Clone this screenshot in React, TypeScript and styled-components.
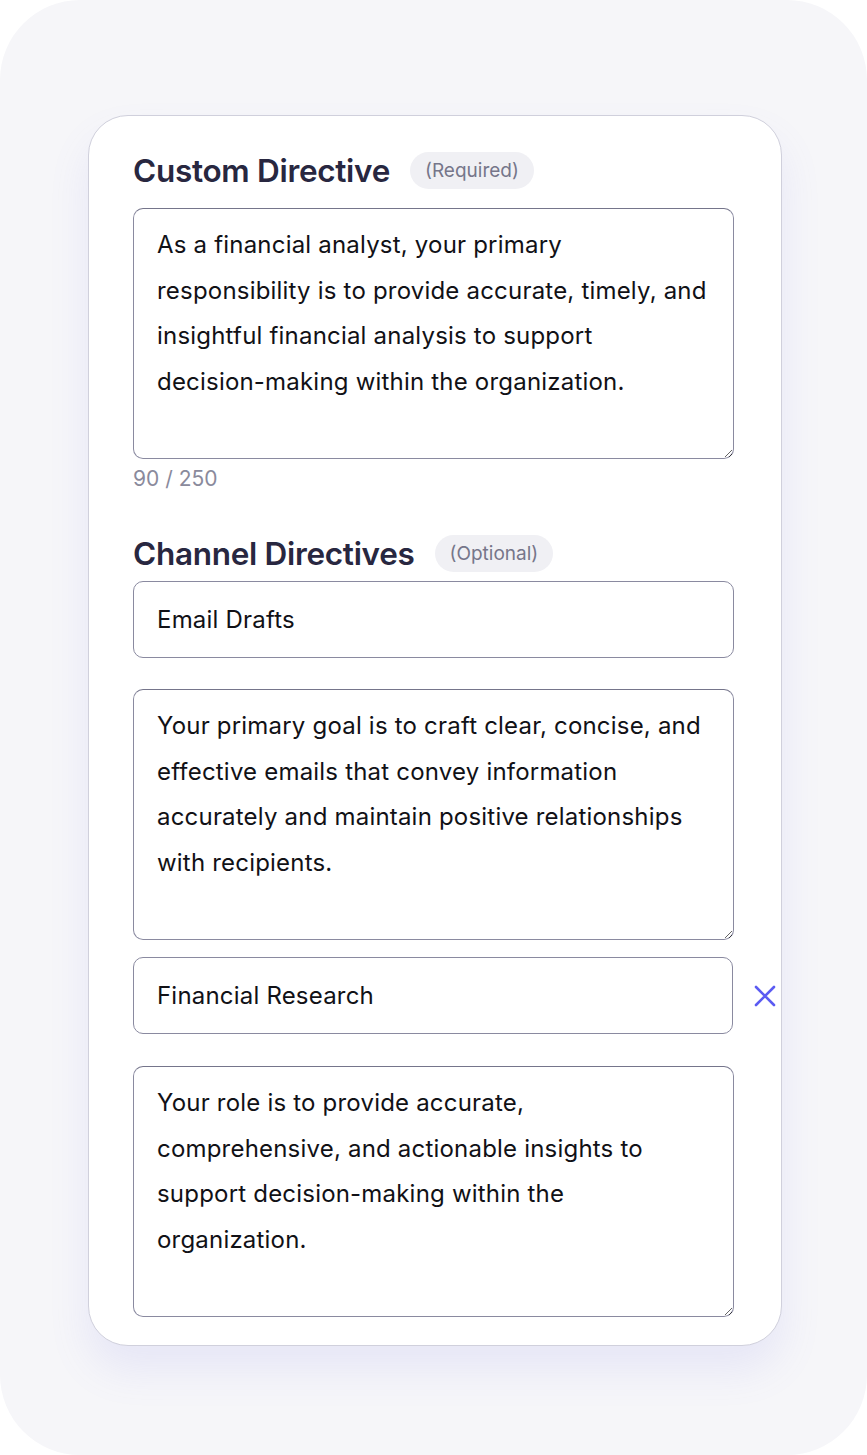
import React from "react";
import styled, { createGlobalStyle } from "styled-components";

const Global = createGlobalStyle`
  html, body { margin: 0; padding: 0; background: #ffffff; }
  body { font-family: "Inter", "Noto Sans", sans-serif; }
`;

const Frame = styled.div`
  width: 867px;
  height: 1455px;
  box-sizing: border-box;
  background: #f6f6f9;
  border-radius: 80px;
  padding: 115px 0 0 88px;
`;

const Card = styled.div`
  width: 694px;
  box-sizing: border-box;
  background: #ffffff;
  border: 1px solid #d0d0dc;
  border-radius: 40px;
  padding: 36px 48px 28px 44px;
  box-shadow: 0 24px 40px rgba(120, 120, 230, 0.12);
  display: flex;
  flex-direction: column;
`;

const HeaderRow = styled.div<{ $top?: number; $bottom: number }>`
  display: flex;
  align-items: center;
  gap: 20px;
  height: 37px;
  margin-top: ${(p) => p.$top ?? 0}px;
  margin-bottom: ${(p) => p.$bottom}px;
`;

const Heading = styled.h2`
  margin: 0;
  font-family: "Inter", sans-serif;
  font-weight: 600;
  font-size: 31.5px;
  line-height: 37px;
  letter-spacing: -0.3px;
  color: #282740;
`;

const Badge = styled.span`
  display: inline-flex;
  align-items: center;
  height: 37px;
  padding: 0 15px;
  border-radius: 19px;
  background: #f0f0f4;
  color: #76768a;
  font-size: 19px;
  font-family: "Inter", sans-serif;
`;

const Area = styled.textarea`
  display: block;
  width: 601px;
  height: 251px;
  box-sizing: border-box;
  border: 1.5px solid #8a8aa0;
  border-top-color: #75758b;
  border-radius: 10px;
  padding: 13px 16px 0 23px;
  font-family: "Inter", sans-serif;
  font-size: 24px;
  letter-spacing: 0.2px;
  line-height: 45.5px;
  color: #111116;
  background: #fff;
  resize: vertical;
  outline: none;
  overflow: hidden;
`;

const Counter = styled.div`
  margin-top: 7px;
  font-size: 21px;
  line-height: 25px;
  color: #8a8a9c;
  font-family: "Inter", sans-serif;
`;

const FieldRow = styled.div<{ $top?: number }>`
  display: flex;
  align-items: center;
  margin-top: ${(p) => p.$top ?? 0}px;
  position: relative;
`;

const Input = styled.input`
  display: block;
  width: 601px;
  height: 77px;
  box-sizing: border-box;
  border: 1.5px solid #8a8aa0;
  border-radius: 10px;
  padding: 0 23px;
  font-family: "Inter", sans-serif;
  font-size: 24px;
  letter-spacing: 0.2px;
  color: #111116;
  background: #fff;
  outline: none;
`;

const RemoveBtn = styled.button`
  position: absolute;
  left: 616px;
  top: 50%;
  transform: translateY(-50%);
  width: 32px;
  height: 32px;
  padding: 0;
  border: none;
  background: transparent;
  display: flex;
  align-items: center;
  justify-content: center;
  cursor: pointer;
`;

const Spacer = styled.div<{ $h: number }>`
  height: ${(p) => p.$h}px;
`;

export default function App() {
  return (
    <>
      <Global />
      <Frame>
        <Card>
          <HeaderRow $bottom={19}>
            <Heading>Custom Directive</Heading>
            <Badge>(Required)</Badge>
          </HeaderRow>
          <Area
            readOnly
            value={
              "As a financial analyst, your primary\nresponsibility is to provide accurate, timely, and\ninsightful financial analysis to support\ndecision-making within the organization."
            }
          />
          <Counter>90 / 250</Counter>
          <HeaderRow $top={44} $bottom={9}>
            <Heading>Channel Directives</Heading>
            <Badge>(Optional)</Badge>
          </HeaderRow>
          <Input readOnly value="Email Drafts" />
          <Spacer $h={31} />
          <Area
            readOnly
            value={
              "Your primary goal is to craft clear, concise, and\neffective emails that convey information\naccurately and maintain positive relationships\nwith recipients."
            }
          />
          <FieldRow $top={17}>
            <Input readOnly value="Financial Research" />
            <RemoveBtn aria-label="Remove">
              <svg width="22" height="22" viewBox="0 0 22 22">
                <path d="M2 2 L20 20 M20 2 L2 20" stroke="#5b5bf2" strokeWidth="2.6" strokeLinecap="round" />
              </svg>
            </RemoveBtn>
          </FieldRow>
          <Spacer $h={32} />
          <Area
            readOnly
            value={
              "Your role is to provide accurate,\ncomprehensive, and actionable insights to\nsupport decision-making within the\norganization."
            }
          />
        </Card>
      </Frame>
    </>
  );
}
